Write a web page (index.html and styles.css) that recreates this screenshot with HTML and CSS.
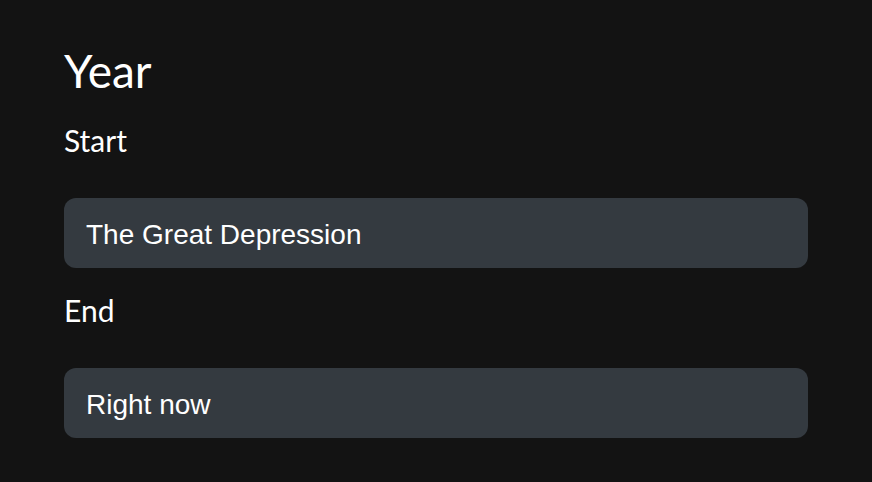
FILE: index.html
```html
<!DOCTYPE html>
<html>
<head>
<meta charset="utf-8">
<link rel="stylesheet" href="styles.css">
</head>
<body>
<main class="panel">
  <h1 class="title">Year</h1>
  <label class="label" for="start">Start</label>
  <input class="field" id="start" type="text" value="The Great Depression">
  <label class="label" for="end">End</label>
  <input class="field" id="end" type="text" value="Right now">
</main>
</body>
</html>
```

FILE: styles.css
```css
html, body {
  margin: 0;
  padding: 0;
  background: #131313;
  height: 100%;
}
.panel {
  display: flex;
  flex-direction: column;
  align-items: flex-start;
  padding: 43px 64px 0 64px;
  width: 744px;
}
.title {
  margin: 0 0 23px 0;
  font-family: Lato, sans-serif;
  font-weight: 400;
  font-size: 46px;
  line-height: 56px;
  color: #ffffff;
}
.label {
  font-family: Lato, sans-serif;
  font-size: 30px;
  line-height: 36px;
  color: #ffffff;
  margin: 0 0 40px 0;
}
.field {
  box-sizing: border-box;
  height: 70px;
  width: 744px;
  border: none;
  outline: none;
  border-radius: 12px;
  background: #343a40;
  color: #ffffff;
  font-family: "Liberation Sans", Arial, sans-serif;
  font-size: 28px;
  padding: 4px 22px 0 22px;
  margin: 0 0 24px 0;
}
```
